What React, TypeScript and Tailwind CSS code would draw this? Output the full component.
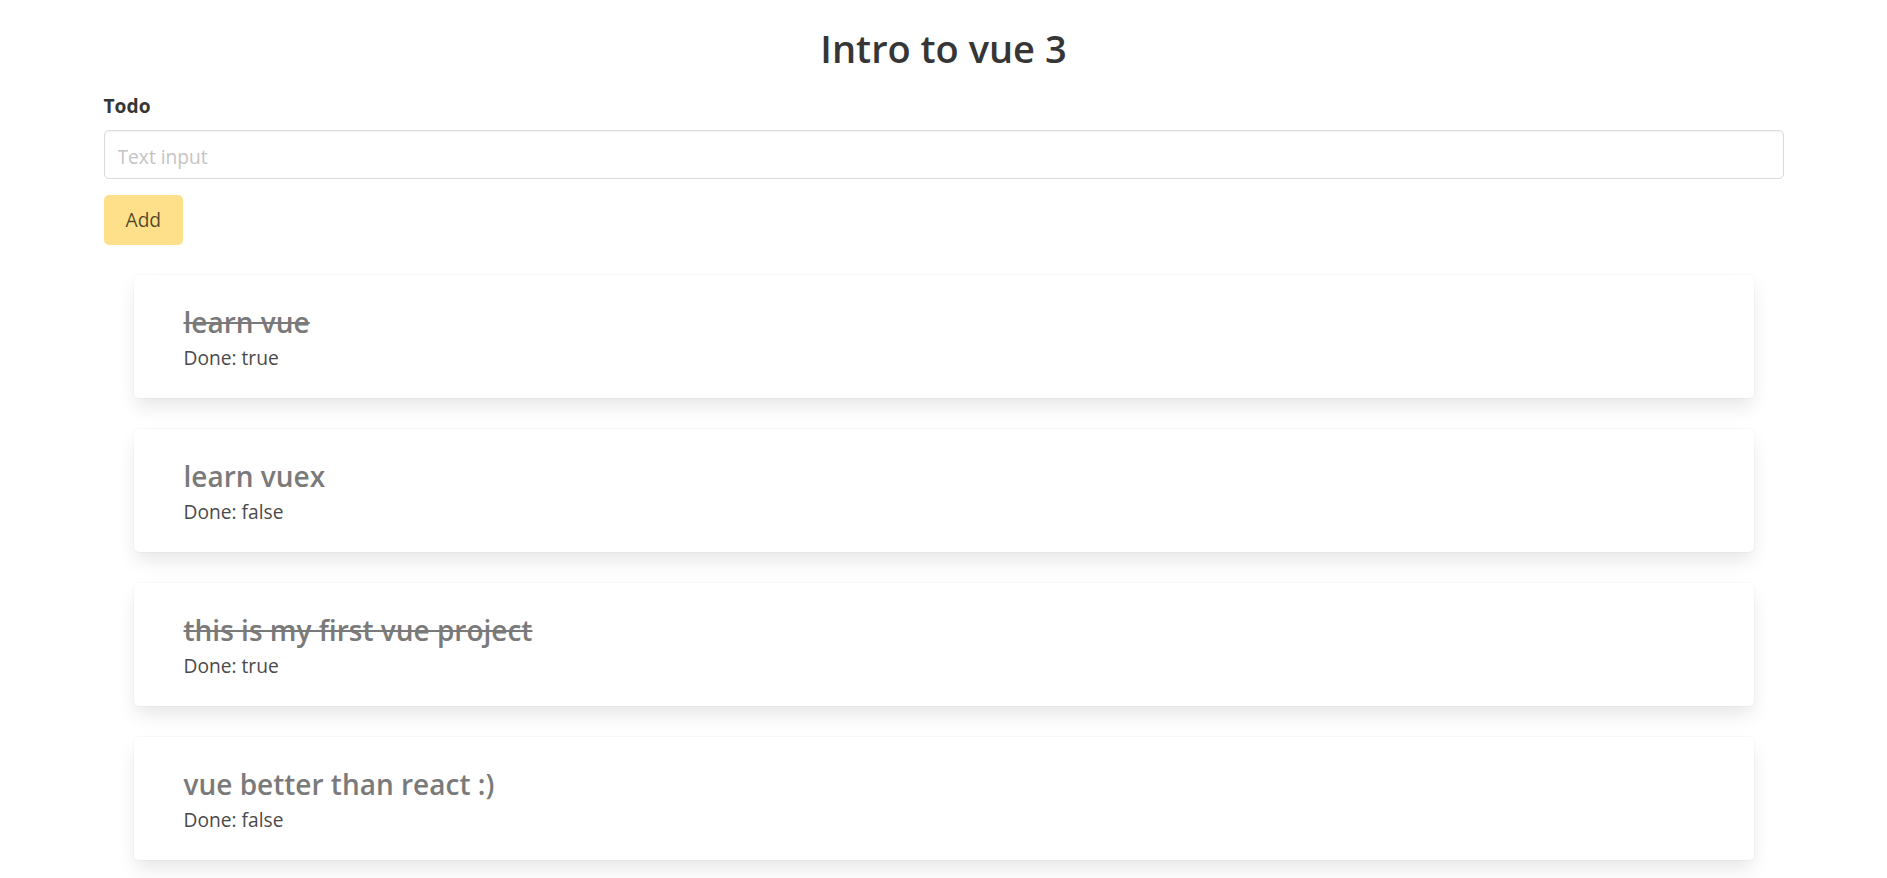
import { useState } from 'react';

type Todo = {
  id: number;
  text: string;
  done: boolean;
};

const initialTodos: Todo[] = [
  { id: 1, text: 'learn vue', done: true },
  { id: 2, text: 'learn vuex', done: false },
  { id: 3, text: 'this is my first vue project', done: true },
  { id: 4, text: 'vue better than react :)', done: false },
];

function TodoCard({ text, done }: Todo) {
  return (
    <li className="bg-white rounded-[5px] px-[50px] pt-[29px] pb-[23px] shadow-[0_10px_19px_-2px_rgba(10,10,10,0.1),0_0_0_1px_rgba(10,10,10,0.02)]">
      <p className={`text-[28px] leading-[36px] font-semibold text-[#7a7a7a] ${done ? 'line-through' : ''}`}>
        {text}
      </p>
      <p className="text-[19.2px] leading-[35px] text-[#4a4a4a]">Done: {String(done)}</p>
    </li>
  );
}

export default function App() {
  const [todos, setTodos] = useState<Todo[]>(initialTodos);
  const [text, setText] = useState('');

  const addTodo = () => {
    if (!text.trim()) return;
    setTodos([...todos, { id: Date.now(), text, done: false }]);
    setText('');
  };

  return (
    <div className="min-h-screen bg-white text-[#4a4a4a] font-['Open_Sans',sans-serif] text-[19.2px]">
      <div className="w-[1680px] mx-auto pt-[27px] pb-[40px]">
        <h1 className="text-center text-[38px] leading-[43px] font-semibold text-[#363636]">Intro to vue 3</h1>

        <label className="block mt-[21px] text-[19.2px] leading-[29px] font-bold text-[#363636]">Todo</label>
        <input
          value={text}
          onChange={(e) => setText(e.target.value)}
          placeholder="Text input"
          className="mt-[10px] block w-full h-[49px] px-[13px] pt-[4px] border border-[#dbdbdb] rounded-[5px] text-[19.2px] text-[#363636] placeholder:text-[#c4c4c4] shadow-[inset_0_1px_2px_rgba(10,10,10,0.05)] outline-none"
        />

        <button
          type="button"
          onClick={addTodo}
          className="mt-[16px] h-[50px] px-[22px] rounded-[5px] bg-[#ffe08a] text-[19.2px] text-black/70"
        >
          Add
        </button>

        <ul className="mt-[30px] mx-[30px] flex flex-col gap-[31px]">
          {todos.map((t) => (
            <TodoCard key={t.id} {...t} />
          ))}
        </ul>
      </div>
    </div>
  );
}
